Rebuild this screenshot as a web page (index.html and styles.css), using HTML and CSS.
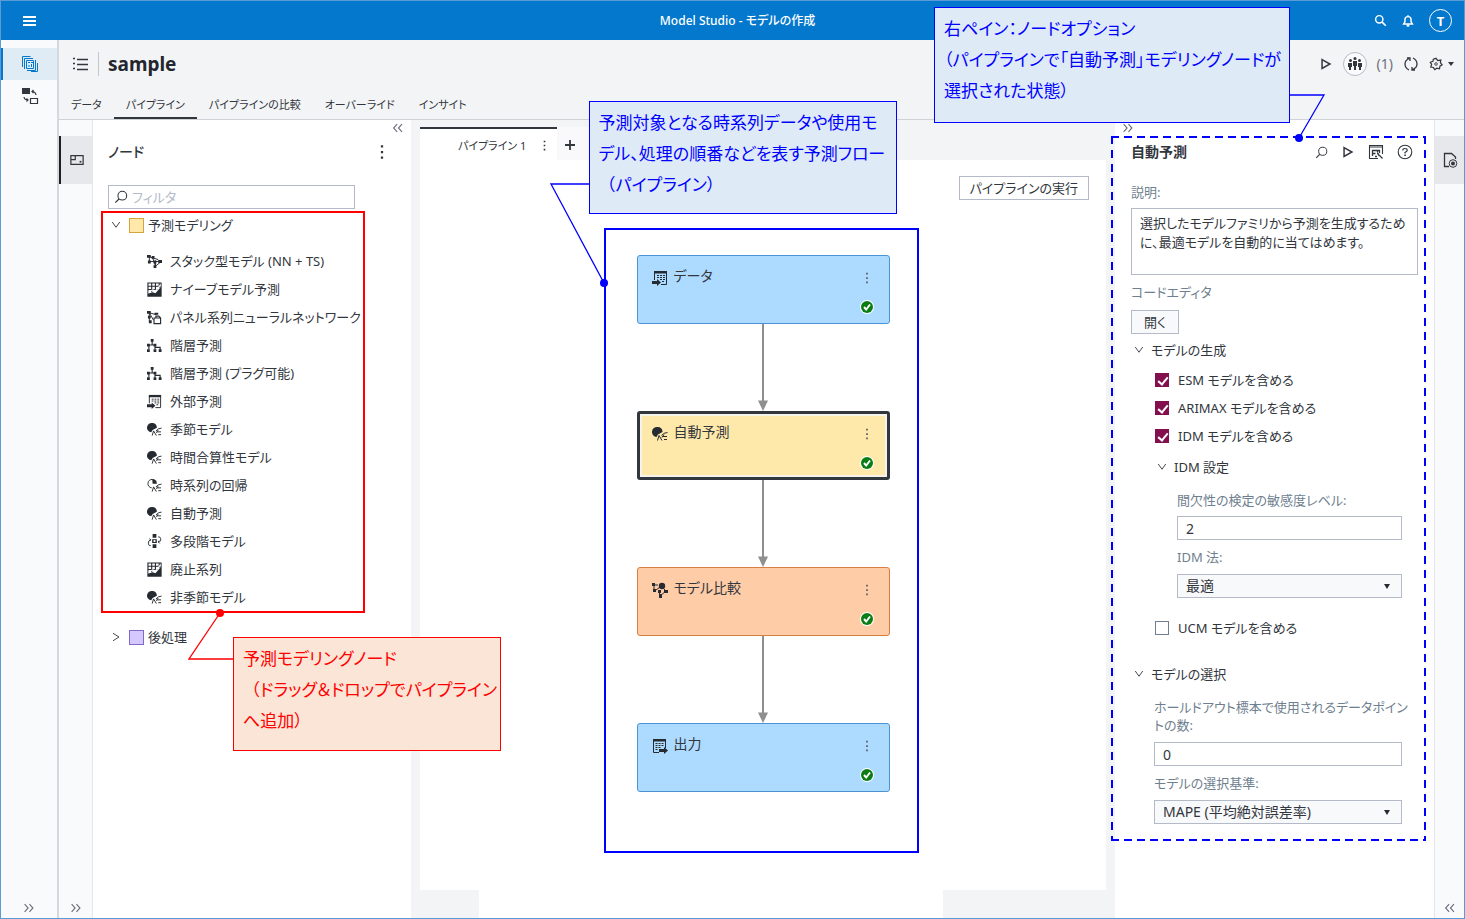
FILE: index.html
```
<!DOCTYPE html>
<html lang="ja">
<head>
<meta charset="utf-8">
<title>Model Studio - モデルの作成</title>
<link rel="stylesheet" href="styles.css">
</head>
<body>
<svg class="sprite" aria-hidden="true">
  <symbol id="i-stack" viewBox="0 0 16 16"><path d="M2.500 3V9M2.500 3L12 6M3 8H14M6 4L9 13L14 9M9 7V13" fill="none" stroke="currentColor"/><path d="M0 1h4v3H0zM1 7h3v3H1zM5 2h3v3H5zM12 6.500h4v3h-4zM7 12h3v3H7zM7 7h3v3H7z"/></symbol>
  <symbol id="i-chart" viewBox="0 0 16 16"><path d="M1 1H15V15H1zM1 4.500H14M1 8H11M5 1V11M9 1V9M13 1V6" fill="none" stroke="currentColor" stroke-width="1.200"/><path d="M1 12.500L6 11L9 12L15 5V15H1z"/><path d="M1.500 11L6 8.500L9 9.500L14.500 3" fill="none" stroke="#fff" stroke-width="1.200"/></symbol>
  <symbol id="i-panel" viewBox="0 0 16 16"><path d="M2.500 3V12M2.500 3L10 5M2.500 3L7 11" fill="none" stroke="currentColor"/><path d="M0 1h4v3H0zM1 6h3v3H1zM2 11h3v3H2zM8 3h4v2H8z"/><path d="M7.500 8.500H14.500V14.500H7.500zM9.500 8.500V6.500H12.500L14.500 8.500" fill="#fff" stroke="currentColor" stroke-width="1.200"/></symbol>
  <symbol id="i-tree" viewBox="0 0 16 16"><path d="M5.500 2V7M2 12V7.500H8.500V12M8.500 10H14V13" fill="none" stroke="currentColor" stroke-width="1.200"/><path d="M4 1h3v3H4zM0 6h3v3H0zM0 12h3v3H0zM7 12h3v3H7zM12.500 12h3v3h-3zM7 6h3v3H7z"/></symbol>
  <symbol id="i-table-in" viewBox="0 0 16 16"><path d="M2.500 10V1.500H14.500V14.500H9" fill="none" stroke="currentColor"/><path d="M2 1h13v2.500H2zM0 11h5V9l4 3.500L5 16v-2H0z"/><path d="M5 5.500H13M5 7.500H13M8 9.500H13M10 11.500H13" fill="none" stroke="currentColor" stroke-dasharray="2 1"/></symbol>
  <symbol id="i-table-out" viewBox="0 0 16 16"><path d="M7 14.500H1.500V1.500H13.500V10" fill="none" stroke="currentColor"/><path d="M1 1h13v2.500H1zM7 11h5V9l4 3.500L12 16v-2H7z"/><path d="M3.500 5.500H12M3.500 7.500H12M3.500 9.500H9M3.500 11.500H6" fill="none" stroke="currentColor" stroke-dasharray="2 1"/></symbol>
  <symbol id="i-model" viewBox="0 0 16 16"><path d="M5.500 1A4.700 4.700 0 0 1 10.500 6L6 8.500L4.500 11A5 5 0 1 1 5.500 1z"/><path d="M5.500 14.500L7 9.500L10 14.500M9.500 9.500Q12 6.500 15.500 6.500M10 11.500L12 8.500M10.500 10.500H15M12 13.500H15" fill="none" stroke="currentColor"/></symbol>
  <symbol id="i-regress" viewBox="0 0 16 16"><path d="M5.500 1A4.700 4.700 0 0 1 10.500 6L6 6z"/><path d="M6 1.500A4.500 4.500 0 1 0 5 10.500M5.500 14.500L7 9.500L10 14.500M9.500 9.500Q12 6.500 15.500 6.500M10 11.500L12 8.500M10.500 10.500H15M12 13.500H15" fill="none" stroke="currentColor"/></symbol>
  <symbol id="i-stage" viewBox="0 0 16 16"><path d="M6 0h4v4H6zM6 11h4v4H6zM5.500 5.500h5v4h-5z"/><path d="M7 6.500h2v2H7z" fill="#fff"/><path d="M4 6Q1 7 1.500 10.500Q2 13 4 12.500M2.500 5L4 6L3 7.500M12 8.500Q15.500 8 14.500 5Q14 2.500 12 3M13 7L12 8.500L13.500 10" fill="none" stroke="currentColor"/></symbol>
  <symbol id="i-compare" viewBox="0 0 16 16"><path d="M2 3V8M2 3H6M4 8L8 5M10 5L14 9L8 14L7 9" fill="none" stroke="currentColor"/><circle cx="10" cy="4" r="3.200"/><path d="M0 1h3v3H0zM1 7h3v3H1zM6 8h3v3H6zM12 8h4v3h-4zM7 12h3v4H7z"/></symbol>
  <symbol id="i-search" viewBox="0 0 16 16"><circle cx="9.500" cy="6.500" r="5" fill="none" stroke="currentColor" stroke-width="1.200"/><path d="M6 10L1.500 14.500" stroke="currentColor" stroke-width="1.400"/></symbol>
  <symbol id="i-search-bold" viewBox="0 0 16 16"><circle cx="6.500" cy="6.500" r="4.500" fill="none" stroke="currentColor" stroke-width="1.800"/><path d="M10 10L14.500 14.500" stroke="currentColor" stroke-width="2"/></symbol>
  <symbol id="i-play" viewBox="0 0 16 16"><path d="M3.500 3L12.500 8L3.500 13z" fill="none" stroke="currentColor" stroke-width="1.700"/></symbol>
  <symbol id="i-kebab" viewBox="0 0 16 16"><path d="M7 2h2v2H7zM7 7h2v2H7zM7 12h2v2H7z"/></symbol>
  <symbol id="i-right" viewBox="0 0 16 16"><path d="M3 3.500L7 8L3 12.500M8.500 3.500L12.500 8L8.500 12.500" fill="none" stroke="currentColor" stroke-width="1.300"/></symbol>
  <symbol id="i-left" viewBox="0 0 16 16"><path d="M7 3.500L3 8L7 12.500M12.500 3.500L8.500 8L12.500 12.500" fill="none" stroke="currentColor" stroke-width="1.300"/></symbol>
  <symbol id="i-down" viewBox="0 0 16 16"><path d="M3 4L8 11L13 4" fill="none" stroke="currentColor" stroke-width="1.200"/></symbol>
  <symbol id="i-next" viewBox="0 0 16 16"><path d="M4 3L12 8L4 13" fill="none" stroke="currentColor" stroke-width="1.200"/></symbol>
  <symbol id="i-done" viewBox="0 0 16 16"><circle cx="8" cy="8" r="7" fill="#fff"/><circle cx="8" cy="8" r="6" fill="#0a7d14"/><path d="M5 8L7.200 10.500L11 5.500" fill="none" stroke="#fff" stroke-width="1.900"/></symbol>
</svg>

<div class="app">
  <header class="topbar">
    <button class="icon-btn topbar-menu" aria-label="メニュー"><svg viewBox="0 0 14 12"><path d="M0 1h13v2H0zM0 5h13v2H0zM0 9h13v2H0z"/></svg></button>
    <h1 class="topbar-title">Model Studio - モデルの作成</h1>
    <div class="topbar-actions">
      <button class="icon-btn" aria-label="検索"><svg class="s13"><use href="#i-search-bold"/></svg></button>
      <button class="icon-btn" aria-label="通知"><svg class="s14" viewBox="0 0 16 16"><path d="M3 11.500H13L11.500 9V6.500A3.500 3.500 0 0 0 4.500 6.500V9zM8 1.500V3" fill="none" stroke="currentColor" stroke-width="1.700"/><path d="M6.500 12h3v2.500h-3z"/></svg></button>
      <button class="avatar" aria-label="ユーザー">T</button>
    </div>
  </header>

  <div class="body">
    <nav class="rail">
      <button class="rail-item rail-active" aria-label="プロジェクト"><svg class="s18" viewBox="0 0 18 18"><path d="M1.500 12V1.500H9.500M3.500 14V3.500H12M5.500 5.500H12.500V13.500H5.500zM14.500 5V15.500H6M16.500 8V16.500H10" fill="none" stroke="currentColor"/><path d="M7 7h2v1H7zM10 7h2v1h-2zM7.500 10h1v2h-1zM10 9h1v3h-1z"/></svg></button>
      <button class="rail-item" aria-label="交換"><svg class="s18" viewBox="0 0 18 18"><path d="M1 1h8v6H1z"/><path d="M9.500 11.500h7v5h-7zM11 4.500Q14.500 4.500 15 8M12.500 3L11 4.500L12.500 6M3 10Q3.500 13 7 13M5.500 11.500L7 13L5.500 14.500" fill="none" stroke="currentColor" stroke-width="1.200"/></svg></button>
      <button class="icon-btn rail-end" aria-label="展開"><svg class="s14"><use href="#i-right"/></svg></button>
    </nav>

    <div class="content">
      <div class="project">
        <div class="project-row">
          <button class="icon-btn" aria-label="一覧"><svg class="s16" viewBox="0 0 16 16"><path d="M1 2.500h2M1 7.500h2M1 12.500h2M5 3.500h11M5 8.500h11M5 13.500h11" stroke="currentColor" stroke-width="1.300"/></svg></button>
          <h2 class="project-name">sample</h2>
          <div class="project-actions">
            <button class="icon-btn" aria-label="実行"><svg class="s14"><use href="#i-play"/></svg></button>
            <button class="people" aria-label="共同作業者"><svg class="s16" viewBox="0 0 16 16"><circle cx="3.500" cy="4.500" r="1.500"/><circle cx="8" cy="2.500" r="1.500"/><circle cx="12.500" cy="4.500" r="1.500"/><path d="M1 7h4v4H4v3H2v-3H1zM6 5h4v5H9v4H7v-4H6zM11 7h4v4h-1v3h-2v-3h-1z"/></svg></button>
            <span class="people-count">(1)</span>
            <button class="icon-btn" aria-label="更新"><svg class="s16" viewBox="0 0 16 16"><path d="M6 14Q2 12 2 8Q2 4 6.500 2.500M10 2Q14 4 14 8Q14 12 9.500 13.500M4 2H7V5M12 14H9V11" fill="none" stroke="currentColor" stroke-width="1.300"/></svg></button>
            <button class="icon-btn gear" aria-label="設定"><svg class="s14" viewBox="0 0 16 16"><path d="M8 1.500L10 4L13.500 3.500L13 6.500L15 9L12.500 10.500L12 13.500L9 12.800L6.500 14.500L5 12L2 11.500L3 8.500L1.500 6L4.500 5L5 2.500z" fill="none" stroke="currentColor" stroke-width="1.400"/><circle cx="8" cy="8" r="1.500" fill="none" stroke="currentColor"/></svg><span class="caret"></span></button>
          </div>
        </div>
        <nav class="tabs">
          <a class="tab" href="#data">データ</a>
          <a class="tab tab-active" href="#pipeline">パイプライン</a>
          <a class="tab" href="#compare">パイプラインの比較</a>
          <a class="tab" href="#override">オーバーライド</a>
          <a class="tab" href="#insight">インサイト</a>
        </nav>
      </div>

      <div class="work">
        <nav class="side">
          <button class="side-item side-active" aria-label="ノード"><svg class="s14" viewBox="0 0 16 16"><path d="M1 3H15V13H1zM1 7.500H6V3" fill="none" stroke="currentColor" stroke-width="1.400"/><path d="M11 9h2v2h-2z"/></svg></button>
          <button class="icon-btn rail-end" aria-label="展開"><svg class="s14"><use href="#i-right"/></svg></button>
        </nav>

        <section class="palette">
          <div class="pane-toggle toggle-end"><button class="icon-btn" aria-label="折りたたむ"><svg class="s14"><use href="#i-left"/></svg></button></div>
          <div class="palette-head">
            <h3>ノード</h3>
            <button class="icon-btn" aria-label="その他"><svg class="s18"><use href="#i-kebab"/></svg></button>
          </div>
          <label class="filter"><svg class="s14"><use href="#i-search"/></svg><input type="text" placeholder="フィルタ" aria-label="フィルタ"></label>
          <div class="tree-frame">
            <div class="group"><svg class="s12"><use href="#i-down"/></svg><span class="swatch swatch-yellow"></span>予測モデリング</div>
            <ul class="nodes">
              <li><svg><use href="#i-stack"/></svg>スタック型モデル (NN + TS)</li>
              <li><svg><use href="#i-chart"/></svg>ナイーブモデル予測</li>
              <li><svg><use href="#i-panel"/></svg>パネル系列ニューラルネットワーク</li>
              <li><svg><use href="#i-tree"/></svg>階層予測</li>
              <li><svg><use href="#i-tree"/></svg>階層予測 (プラグ可能)</li>
              <li><svg><use href="#i-table-in"/></svg>外部予測</li>
              <li><svg><use href="#i-model"/></svg>季節モデル</li>
              <li><svg><use href="#i-model"/></svg>時間合算性モデル</li>
              <li><svg><use href="#i-regress"/></svg>時系列の回帰</li>
              <li><svg><use href="#i-model"/></svg>自動予測</li>
              <li><svg><use href="#i-stage"/></svg>多段階モデル</li>
              <li><svg><use href="#i-chart"/></svg>廃止系列</li>
              <li><svg><use href="#i-model"/></svg>非季節モデル</li>
            </ul>
            <svg class="leader leader-red" viewBox="0 0 48 52"><path d="M45 50H1L32 4" fill="none" stroke="currentColor" stroke-width="1.300"/><circle cx="32" cy="4" r="4"/></svg>
            <div class="callout callout-red">予測モデリングノード<br><span class="wide">（</span>ドラッグ＆ドロップでパイプライン<br>へ追加）</div>
          </div>
          <div class="group group-post"><svg class="s12"><use href="#i-next"/></svg><span class="swatch swatch-purple"></span>後処理</div>
        </section>

        <main class="stage">
          <div class="stage-tabs">
            <div class="stage-tab"><span>パイプライン 1</span><button class="icon-btn" aria-label="その他"><svg class="s13"><use href="#i-kebab"/></svg></button></div>
            <button class="add-tab" aria-label="追加"><svg class="s12" viewBox="0 0 12 12"><path d="M6 1V11M1 6H11" stroke="currentColor" stroke-width="1.800"/></svg></button>
          </div>
          <div class="canvas">
            <div class="canvas-bar"><button class="btn">パイプラインの実行</button></div>
            <div class="flow">
              <div class="node node-blue"><svg class="s16"><use href="#i-table-in"/></svg><span>データ</span><div class="node-side"><svg class="s14"><use href="#i-kebab"/></svg><svg class="s16"><use href="#i-done"/></svg></div></div>
              <svg class="arrow" viewBox="0 0 10 87"><path d="M5 0V78" stroke="currentColor" stroke-width="2"/><path d="M0 76.500H10L5 87z"/></svg>
              <div class="node node-yellow"><svg class="s16"><use href="#i-model"/></svg><span>自動予測</span><div class="node-side"><svg class="s14"><use href="#i-kebab"/></svg><svg class="s16"><use href="#i-done"/></svg></div></div>
              <svg class="arrow" viewBox="0 0 10 87"><path d="M5 0V78" stroke="currentColor" stroke-width="2"/><path d="M0 76.500H10L5 87z"/></svg>
              <div class="node node-orange"><svg class="s16"><use href="#i-compare"/></svg><span>モデル比較</span><div class="node-side"><svg class="s14"><use href="#i-kebab"/></svg><svg class="s16"><use href="#i-done"/></svg></div></div>
              <svg class="arrow" viewBox="0 0 10 87"><path d="M5 0V78" stroke="currentColor" stroke-width="2"/><path d="M0 76.500H10L5 87z"/></svg>
              <div class="node node-blue"><svg class="s16"><use href="#i-table-out"/></svg><span>出力</span><div class="node-side"><svg class="s14"><use href="#i-kebab"/></svg><svg class="s16"><use href="#i-done"/></svg></div></div>
              <svg class="leader leader-flow" viewBox="0 0 60 106"><path d="M40 2H2L55 101" fill="none" stroke="currentColor" stroke-width="1.300"/><circle cx="55" cy="101" r="4"/></svg>
              <div class="callout callout-flow">予測対象となる時系列データや使用モ<br>デル、処理の順番などを表す予測フロー<br><span class="wide">（</span>パイプライン）</div>
            </div>
          </div>
          <div class="stage-foot"><span></span></div>
        </main>

        <aside class="options">
          <div class="pane-toggle"><button class="icon-btn" aria-label="折りたたむ"><svg class="s14"><use href="#i-right"/></svg></button></div>
          <div class="options-body">
            <div class="options-head">
              <h3>自動予測</h3>
              <button class="icon-btn" aria-label="検索"><svg class="s13"><use href="#i-search"/></svg></button>
              <button class="icon-btn" aria-label="実行"><svg class="s14"><use href="#i-play"/></svg></button>
              <button class="icon-btn" aria-label="結果"><svg class="s16" viewBox="0 0 16 16"><path d="M14.500 10V1.500H1.500V14.500H10M1.500 3H14.500" fill="none" stroke="currentColor" stroke-width="1.100"/><path d="M4.500 12V6.500H11.500V9M9.500 6.500V8.500M5 9.500H7.500M7 12.500H9M9 9.500Q11 9.500 11 12M11.500 11.500L14.500 14.500" fill="none" stroke="currentColor" stroke-width="1.300"/></svg></button>
              <button class="icon-btn" aria-label="ヘルプ"><svg class="s16" viewBox="0 0 16 16"><circle cx="8" cy="8" r="6.800" fill="none" stroke="currentColor" stroke-width="1.100"/><path d="M5.800 6.500Q5.800 4.500 8 4.500Q10.200 4.500 10.200 6.300Q10.200 7.500 8 8.500V9.500" fill="none" stroke="currentColor" stroke-width="1.200"/><path d="M7.300 10.500h1.500v1.500H7.300z"/></svg></button>
            </div>
            <label class="label" for="desc">説明:</label>
            <textarea class="desc" id="desc">選択したモデルファミリから予測を生成するために、最適モデルを自動的に当てはめます。</textarea>
            <div class="label label-code">コードエディタ</div>
            <button class="btn btn-open">開く</button>
            <div class="section"><svg class="s12"><use href="#i-down"/></svg>モデルの生成</div>
            <div class="indent indent-gap">
              <label class="check"><input type="checkbox" checked>ESM モデルを含める</label>
              <label class="check"><input type="checkbox" checked>ARIMAX モデルを含める</label>
              <label class="check"><input type="checkbox" checked>IDM モデルを含める</label>
              <div class="section section-sub"><svg class="s12"><use href="#i-down"/></svg>IDM 設定</div>
              <div class="sub">
                <label class="label" for="sens">間欠性の検定の敏感度レベル:</label>
                <input class="field" id="sens" type="text" value="2">
                <label class="label label-next" for="idm">IDM 法:</label>
                <div class="select"><select id="idm"><option>最適</option></select></div>
              </div>
              <label class="check check-ucm"><input type="checkbox">UCM モデルを含める</label>
            </div>
            <div class="section"><svg class="s12"><use href="#i-down"/></svg>モデルの選択</div>
            <div class="indent">
              <label class="label label-wrap" for="hold">ホールドアウト標本で使用されるデータポイントの数:</label>
              <input class="field" id="hold" type="text" value="0">
              <label class="label label-next" for="crit">モデルの選択基準:</label>
              <div class="select"><select id="crit"><option>MAPE (平均絶対誤差率)</option></select></div>
            </div>
            <svg class="dashes" aria-hidden="true"><line x1="0" y1="1" x2="100%" y2="1" stroke-dasharray="8 5"/><line class="edge" x1="0" y1="100%" x2="100%" y2="100%" stroke-dasharray="8 5"/><line x1="1" y1="0" x2="1" y2="100%" stroke-dasharray="8 6"/><line class="edge" x1="100%" y1="0" x2="100%" y2="100%" stroke-dasharray="8 6"/></svg>
            <svg class="leader leader-options" viewBox="0 0 40 50"><path d="M1 2H35L10 45" fill="none" stroke="currentColor" stroke-width="1.300"/><circle cx="10" cy="45" r="4"/></svg>
            <div class="callout callout-options">右ペイン：ノードオプション<br>（パイプラインで「自動予測」モデリングノードが<br>選択された状態）</div>
          </div>
        </aside>

        <nav class="side side-right">
          <button class="side-item" aria-label="プロパティ"><svg class="s16" viewBox="0 0 16 16"><path d="M7 14.500H2.500V1.500H9.500L13.500 5V7" fill="none" stroke="currentColor" stroke-width="1.300"/><circle cx="11" cy="11.500" r="3.800" fill="none" stroke="currentColor"/><circle cx="11" cy="11.500" r="2"/></svg></button>
          <button class="icon-btn rail-end" aria-label="展開"><svg class="s14"><use href="#i-left"/></svg></button>
        </nav>
      </div>
    </div>
  </div>
</div>
</body>
</html>
```
FILE: styles.css
```
* { box-sizing: border-box; }
body {
  margin: 0;
  color: #32363d;
  font-family: "Noto Sans", "Noto Sans CJK JP", sans-serif;
  font-size: 14px;
  line-height: 20px;
  font-feature-settings: "palt";
}
h1, h2, h3, ul { margin: 0; padding: 0; }
ul { list-style: none; }
button, input, select, textarea { font: inherit; font-feature-settings: inherit; color: inherit; margin: 0; border-radius: 0; }
svg { fill: currentColor; flex: none; display: block; }
.sprite { position: absolute; width: 0; height: 0; }
.s12 { width: 12px; height: 12px; }
.s13 { width: 13px; height: 13px; }
.s14 { width: 14px; height: 14px; }
.s16 { width: 16px; height: 16px; }
.s18 { width: 18px; height: 18px; }
.icon-btn { display: flex; align-items: center; justify-content: center; padding: 0; border: 0; background: none; }

.app { min-height: 100vh; display: flex; flex-direction: column; border: 1px solid #5b9bd5; }
.topbar { display: flex; align-items: center; justify-content: space-between; height: 39px; padding: 0 12px 0 22px; background: #0378cd; color: #fff; }
.topbar-menu { width: 14px; }
.topbar-menu svg { width: 14px; height: 12px; }
.topbar-title { flex: 1; padding-left: 64px; text-align: center; font-size: 12px; font-weight: 500; }
.topbar-actions { display: flex; align-items: center; gap: 14px; }
.avatar { width: 23px; height: 23px; padding: 0; border: 1px solid #fff; border-radius: 50%; background: none; color: #fff; font-size: 13px; line-height: 16px; font-weight: 700; }

.body { flex: 1; display: flex; }
.rail { width: 58px; padding-top: 8px; display: flex; flex-direction: column; background: #f9fafc; border-right: 2px solid #d5d8de; }
.rail-item { height: 32px; display: flex; align-items: center; justify-content: center; padding: 0; border: 0; border-left: 2px solid transparent; background: none; }
.rail-active { background: #dfecf6; border-left-color: #0378cd; color: #0378cd; }
.rail-end { margin-top: auto; height: 20px; color: #6c717a; }

.content { flex: 1; min-width: 0; display: flex; flex-direction: column; }
.project { background: #f3f4f6; border-bottom: 1px solid #cfd3d8; }
.project-row { display: flex; align-items: center; height: 48px; padding: 0 10px 0 13px; }
.project-name { margin-left: 10px; padding-left: 9px; border-left: 1px solid #c3c7cd; font-size: 19px; line-height: 24px; font-weight: 700; color: #23272d; }
.project-actions { margin-left: auto; display: flex; align-items: center; gap: 10px; }
.people { width: 24px; height: 24px; padding: 3px; border: 1px solid #b4bac8; border-radius: 50%; background: #f9fafc; }
.people-count { color: #6c717a; font-size: 14px; }
.gear { gap: 5px; }
.caret { border: 3px solid transparent; border-top: 4px solid #32363d; border-bottom: 0; }
.tabs { display: flex; }
.tab { padding: 7px 12px 2px; border-bottom: 2px solid transparent; color: inherit; text-decoration: none; font-size: 11px; }
.tab-active { border-bottom-color: #32363d; }

.work { flex: 1; display: flex; background: #f3f4f6; }
.side { width: 34px; padding-top: 16px; display: flex; flex-direction: column; background: #f9fafc; border-right: 1px solid #e7e8eb; }
.side-item { height: 48px; display: flex; align-items: center; justify-content: center; padding: 0; border: 0; background: #e7e8eb; }
.side-active { border-left: 2px solid #1c1f24; }
.side-right { width: 30px; border-right: 0; border-left: 1px solid #e3e7ea; }

.palette { width: 318px; background: #fff; }
.pane-toggle { display: flex; height: 16px; padding: 0 6px; color: #6c717a; }
.toggle-end { justify-content: flex-end; }
.palette-head { display: flex; align-items: center; justify-content: space-between; height: 32px; padding: 0 20px 0 15px; }
.palette-head h3 { font-size: 14px; font-weight: 500; }
.filter { display: flex; align-items: center; gap: 4px; height: 24px; margin: 17px 56px 2px 15px; padding-left: 5px; border: 1px solid #b4bac8; }
.filter input { flex: 1; min-width: 0; padding: 0; border: 0; background: none; font-size: 13px; }
.filter input::placeholder { color: #b4bac8; }
.tree-frame { position: relative; z-index: 2; margin: 0 46px 0 8px; border: 2px solid #f00; }
.group { display: flex; align-items: center; height: 24px; padding-left: 7px; font-size: 13px; }
.swatch { width: 15px; height: 15px; margin: 0 4px 0 7px; border: 1px solid #d3a63c; background: #ffe8a9; }
.swatch-purple { border-color: #8268c8; background: #d5c8ff; }
.group-post { margin: 12px 0 0 10px; }
.nodes { padding-top: 10px; }
.nodes li { display: flex; align-items: center; gap: 8px; height: 28px; padding-left: 44px; font-size: 13px; white-space: nowrap; }
.nodes svg { width: 15px; height: 15px; color: #262a31; }

.callout { position: absolute; z-index: 3; padding: 5px 9px; border: 1px solid #00f; background: #deeaf6; color: #00f; font-size: 17px; line-height: 31px; white-space: nowrap; }
.wide { font-feature-settings: normal; }
.leader { position: absolute; z-index: 4; color: #00f; }
.callout-red { left: 130px; top: 424px; width: 268px; height: 114px; border-color: #f00; background: #fbe5d6; color: #f00; }
.leader-red { left: 85px; top: 396px; width: 48px; height: 52px; color: #f00; }
.callout-flow { left: -17px; top: -129px; width: 308px; height: 113px; }
.leader-flow { left: -57px; top: -48px; width: 60px; height: 106px; }
.callout-options { right: 144px; top: -129px; width: 356px; height: 116px; }
.leader-options { right: 105px; top: -43px; width: 40px; height: 50px; }

.stage { flex: 1; min-width: 0; margin: 7px 9px 0; display: flex; flex-direction: column; }
.stage-tabs { display: flex; height: 33px; }
.stage-tab { display: flex; align-items: center; justify-content: space-between; width: 137px; padding: 2px 6px 0 38px; border-top: 2px solid #32363d; background: #fff; font-size: 11px; }
.add-tab { display: flex; align-items: center; width: 32px; padding: 2px 0 0 7px; border: 0; background: #f9f9fb; }
.canvas { flex: 1; padding: 0 4px 37px 0; background: #fff; }
.canvas-bar { display: flex; justify-content: flex-end; padding: 16px 13px 28px; }
.btn { height: 24px; padding: 0 10px; border: 1px solid #b4bac8; background: #fff; font-size: 13px; line-height: 20px; }
.flow { position: relative; z-index: 1; display: flex; flex-direction: column; width: 315px; margin: 0 auto; padding: 25px 27px 59px 31px; border: 2px solid #00f; }
.node { display: flex; gap: 6px; height: 69px; padding: 10px 14px 8px; border: 1px solid #4a94d6; border-radius: 3px; background: #addaff; }
.node > svg { margin-top: 4px; color: #262a31; }
.node-side { margin: 5px 0 0 auto; display: flex; flex-direction: column; align-items: center; justify-content: space-between; color: #5a6068; }
.node-yellow { padding: 8px 12px 6px; border: 3px solid #32363d; background: #ffe9aa; box-shadow: inset 0 0 0 2px #f6f3ea; }
.node-orange { border-color: #d97e42; background: #ffcca8; }
.arrow { width: 10px; height: 87px; margin: 0 auto; color: #8f8f8f; }
.stage-foot { display: flex; justify-content: center; height: 28px; padding-right: 104px; }
.stage-foot span { width: 464px; background: #fff; }

.options { width: 319px; background: #fff; }
.options-body { position: relative; padding: 0 16px 17px; }
.options-head { display: flex; align-items: center; gap: 13px; height: 32px; margin-bottom: 8px; padding-right: 5px; }
.options-head h3 { margin-right: auto; font-size: 14px; font-weight: 700; }
.label { display: block; color: #6f7f8f; font-size: 13px; line-height: 32px; }
.label-code { line-height: 35px; }
.label-next { line-height: 34px; }
.label-wrap { margin-right: -10px; padding: 8px 0; line-height: 18px; }
.desc { display: block; width: 100%; height: 67px; padding: 5px 8px; border: 1px solid #b4bac8; background: #fff; resize: none; font-size: 13px; line-height: 19px; }
.btn-open { display: block; padding: 0 12px; background: #f8f9fb; }
.section { display: flex; align-items: center; gap: 6px; height: 32px; padding-left: 2px; font-size: 13px; }
.section-sub { height: 34px; }
.indent { padding: 0 16px 0 23px; }
.indent-gap { margin-bottom: 16px; }
.sub { padding-left: 23px; }
.check { display: flex; align-items: center; gap: 9px; height: 28px; font-size: 13px; }
.check-ucm { margin-top: 16px; }
.check input { appearance: none; position: relative; width: 14px; height: 14px; margin: 0 0 0 1px; border: 1px solid #6f7f8f; background: #fff; }
.check input:checked { border-color: #830f4f; background: #830f4f; }
.check input:checked::after { content: ""; position: absolute; left: 4px; top: 1px; width: 4px; height: 8px; border: solid #fff; border-width: 0 2px 2px 0; transform: rotate(40deg); }
.field { display: block; width: 100%; height: 24px; padding: 0 8px; border: 1px solid #b4bac8; background: #fff; font-size: 14px; }
.select { position: relative; }
.select select { appearance: none; display: block; width: 100%; height: 24px; padding: 0 8px; border: 1px solid #b4bac8; background: #f8f9fb; font-size: 14px; line-height: 20px; }
.select::after { content: ""; position: absolute; right: 12px; top: 10px; border: 3px solid transparent; border-top: 5px solid #262a31; border-bottom: 0; }
.dashes { position: absolute; left: -4px; top: 0; width: calc(100% - 4px); height: 100%; pointer-events: none; stroke: #00f; stroke-width: 2; }
.edge { stroke-width: 4; }
```
